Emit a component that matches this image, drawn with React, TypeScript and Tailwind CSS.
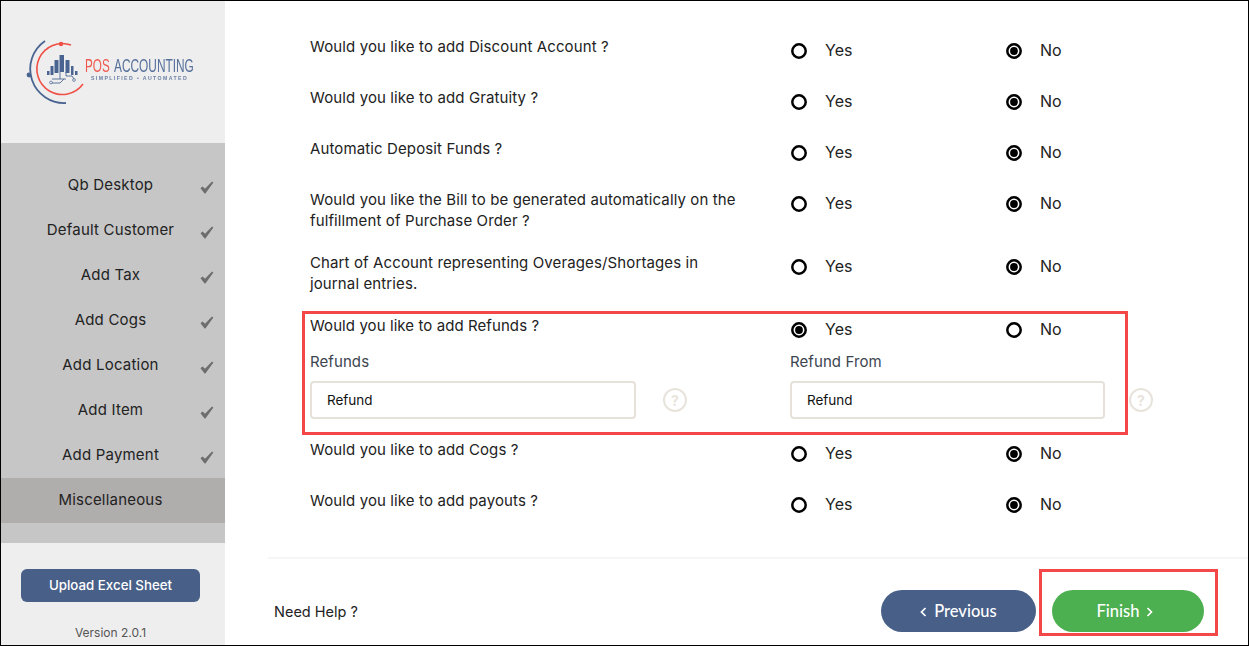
import React from "react";

const font = "[font-family:Inter,'Liberation_Sans',sans-serif]";

function Logo() {
  return (
    <svg width="224" height="142" viewBox="1 1 224 142" className="blur-[0.4px]">
      <path d="M45 41 A34 34 0 0 0 66 103" fill="none" stroke="#4a6491" strokeWidth="1.8" />
      <circle cx="29" cy="75" r="2.4" fill="#4a6491" />
      <path d="M71 45 A25.5 25.5 0 1 0 83 84" fill="none" stroke="#ef4f45" strokeWidth="1.6" />
      <circle cx="61" cy="44" r="2.2" fill="#ef4f45" />
      <g fill="#4a6491">
        <rect x="47" y="71" width="2.5" height="4" />
        <rect x="50.5" y="66" width="3" height="9" />
        <rect x="54.5" y="60" width="4" height="13" />
        <rect x="59.5" y="55" width="4.5" height="17" />
        <rect x="65.5" y="60" width="4" height="13" />
        <rect x="71" y="66" width="2.5" height="9" />
        <rect x="75" y="71" width="2.5" height="4" />
      </g>
      <path d="M52 79 H66 M52 83 H60 L64 79 M60 72 V79 M66 72 V76 H72 L74 79" fill="none" stroke="#4a6491" strokeWidth="0.9" />
      <circle cx="51" cy="82.5" r="1.4" fill="none" stroke="#4a6491" strokeWidth="0.7" />
      <circle cx="74" cy="80" r="1.4" fill="none" stroke="#4a6491" strokeWidth="0.7" />
      <text transform="translate(85 72) scale(0.65 1)" fontFamily="'Liberation Sans'" fontSize="18" fill="#ef5a50">POS</text>
      <text transform="translate(114 72) scale(0.66 1)" fontFamily="'Liberation Sans'" fontSize="18" fill="#55709b">ACCOUNTING</text>
      <text x="91" y="80" fontFamily="'Liberation Sans'" fontSize="5.2" fontWeight="700" fill="#6b80a5" letterSpacing="1.4">SIMPLIFIED • AUTOMATED</text>
    </svg>
  );
}

function Check() {
  return (
    <svg width="14" height="13" viewBox="0 0 14 13" className="ml-[20px] mt-[3px] shrink-0">
      <path d="M0.5 7.2 L2.6 5.4 L5 7.8 L12 0.6 L13.4 1.6 L5.4 12.6 L4.6 12.6 Z" fill="#6d6d6d" />
    </svg>
  );
}

function NavItem({ label, done, active }: { label: string; done?: boolean; active?: boolean }) {
  return (
    <div className={`flex h-[45px] items-center ${active ? "bg-[#b0adad]" : ""}`}>
      <div className="ml-[40px] w-[139px] text-center text-[15px] tracking-[0.2px] text-[#222] whitespace-nowrap">{label}</div>
      {done && <Check />}
    </div>
  );
}

function Radio({ on }: { on?: boolean }) {
  return (
    <svg width="16" height="16" viewBox="0 0 16 16" className="shrink-0 translate-y-px">
      <circle cx="8" cy="8" r="6.7" fill="white" stroke="black" strokeWidth="2.5" />
      {on && <circle cx="8" cy="8" r="3.9" fill="black" />}
    </svg>
  );
}

function Choice({ yes }: { yes?: boolean }) {
  return (
    <div className="flex">
      <div className="flex w-[215px] items-center gap-[18px]">
        <Radio on={yes} />
        <span className="text-[16px] leading-[16px] text-[#222]">Yes</span>
      </div>
      <div className="flex items-center gap-[18px]">
        <Radio on={!yes} />
        <span className="text-[16px] leading-[16px] text-[#222]">No</span>
      </div>
    </div>
  );
}

function Row({ text, h = "h-[51px]" }: { text: React.ReactNode; h?: string }) {
  return (
    <div className={`flex ${h}`}>
      <div className="mr-[49px] w-[432px] -translate-y-px text-[15px] tracking-[0.12px] leading-[21px] text-[#222]">{text}</div>
      <div className="pt-[5px]"><Choice /></div>
    </div>
  );
}

function Help() {
  return (
    <span className="flex h-6 w-6 shrink-0 items-center justify-center rounded-full border-2 border-[#e8e4dc] text-[14px] font-bold text-[#e8e4dc]">?</span>
  );
}

function Field({ label, w, gap }: { label: string; w: string; gap: string }) {
  return (
    <div>
      <div className="mb-[9px] pt-px text-[15px] tracking-[0.08px] leading-[20px] text-[#3c4650]">{label}</div>
      <div className={`flex items-center ${gap}`}>
        <div className={`flex h-[38px] ${w} items-center rounded-[4px] border-2 border-[#e6e2d9] bg-white pl-[15px] text-[13.5px] text-[#111]`}>Refund</div>
        <Help />
      </div>
    </div>
  );
}

function Chevron({ left }: { left?: boolean }) {
  return (
    <svg width="7" height="10" viewBox="0 0 7 10" className="shrink-0">
      <path d={left ? "M5.5 1 L1.5 5 L5.5 9" : "M1.5 1 L5.5 5 L1.5 9"} fill="none" stroke="white" strokeWidth="1.7" />
    </svg>
  );
}

export default function App() {
  return (
    <div className={`flex h-[646px] w-full overflow-hidden border border-black bg-white ${font}`}>
      <aside className="flex w-[224px] shrink-0 flex-col bg-[#eeeeee]">
        <div className="h-[142px]"><Logo /></div>
        <nav className="flex h-[400px] flex-col bg-[#c6c6c6] py-[20px]">
          <NavItem label="Qb Desktop" done />
          <NavItem label="Default Customer" done />
          <NavItem label="Add Tax" done />
          <NavItem label="Add Cogs" done />
          <NavItem label="Add Location" done />
          <NavItem label="Add Item" done />
          <NavItem label="Add Payment" done />
          <NavItem label="Miscellaneous" active />
        </nav>
        <div className="mt-[26px] ml-[20px] flex h-[33px] w-[179px] items-center justify-center rounded-[6px] bg-[#486088] text-[13.3px] font-medium text-white">Upload Excel Sheet</div>
        <div className="mt-[22px] w-[219px] text-center text-[12px] leading-[18px] text-[#555]">Version 2.0.1</div>
      </aside>
      <main className="flex min-w-0 flex-1 flex-col">
        <div className="h-[556px] pt-[36px] pl-[85px]">
          <Row text="Would you like to add Discount Account ?" />
          <Row text="Would you like to add Gratuity ?" />
          <Row text="Automatic Deposit Funds ?" />
          <Row h="h-[63px]" text="Would you like the Bill to be generated automatically on the fulfillment of Purchase Order ?" />
          <Row h="h-[58px]" text="Chart of Account representing Overages/Shortages in journal entries." />
          <div className="mb-[5px] -ml-[8px] h-[124px] w-[826px] border-[3px] border-[#f44747] pt-[2px] pl-[5px]">
            <div className="flex h-[35px]">
              <div className="mr-[49px] w-[432px] -translate-y-px text-[15px] tracking-[0.08px] leading-[21px] text-[#222]">Would you like to add Refunds ?</div>
              <div className="pt-[5px]"><Choice yes /></div>
            </div>
            <div className="flex w-[900px]">
              <div className="w-[480px]"><Field label="Refunds" w="w-[326px]" gap="gap-[27px]" /></div>
              <Field label="Refund From" w="w-[315px]" gap="gap-[24px]" />
            </div>
          </div>
          <Row text="Would you like to add Cogs ?" />
          <Row text="Would you like to add payouts ?" />
        </div>
        <footer className="ml-[43px] flex flex-1 border-t-2 border-[#f6f6f6] pt-[10px] pr-[30px]">
          <div className="mt-[34px] ml-[6px] flex-1 text-[14.5px] leading-[18px] text-[#222]">Need Help ?</div>
          <div className="mt-[21px] mr-[3px] flex h-[42px] w-[155px] items-center justify-center gap-[7px] rounded-full bg-[#486088] pt-px text-[16.5px] font-medium text-white [font-family:Lato,sans-serif]">
            <Chevron left />Previous
          </div>
          <div className="flex h-[67px] w-[179px] border-[3px] border-[#f44747] pt-[18px] pl-[10px]">
            <div className="flex h-[42px] w-[152px] items-center justify-center gap-[7px] rounded-full bg-[#4caf50] pt-px pr-[6px] text-[16.5px] font-medium text-white [font-family:Lato,sans-serif]">
              Finish<Chevron />
            </div>
          </div>
        </footer>
      </main>
    </div>
  );
}
